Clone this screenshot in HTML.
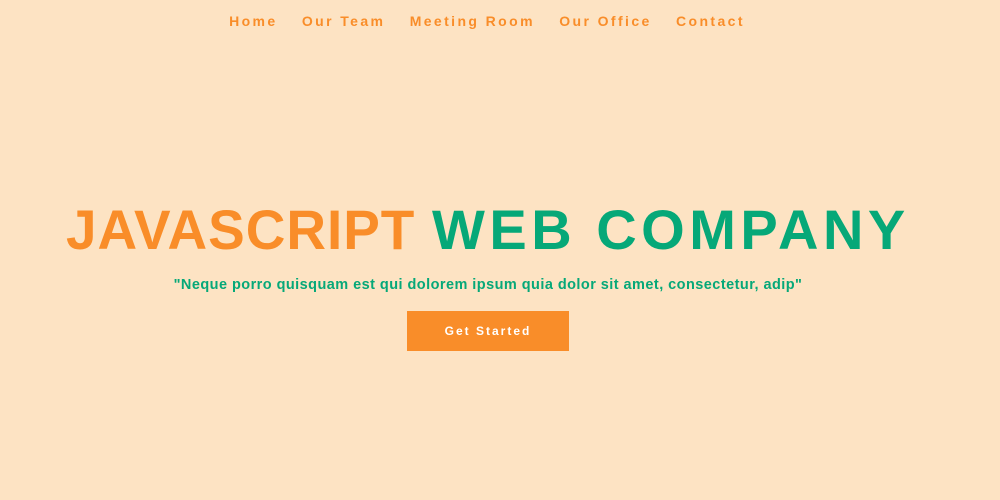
<!DOCTYPE html>
<html><head><style>
body{margin:0;width:1000px;height:500px;background:#fde3c3;font-family:"Liberation Sans",sans-serif;position:relative;overflow:hidden}
.nav{position:absolute;top:13px;left:-13px;width:1000px;text-align:center;font-size:14px;font-weight:bold;color:#f98d29;letter-spacing:2.4px;white-space:nowrap}
.nav span{margin:0 9px}
.h{position:absolute;top:195px;font-size:56px;font-weight:bold;white-space:nowrap;line-height:70px}
.js{left:66px;color:#f98d29;letter-spacing:1px;transform:scaleX(0.98);transform-origin:left}
.wc{left:432px;color:#06a878;letter-spacing:4.5px}
.sub{position:absolute;top:277px;left:-12px;width:1000px;text-align:center;font-size:14.5px;font-weight:bold;color:#06a878;white-space:nowrap;letter-spacing:0.45px}
.btn{position:absolute;left:407px;top:311px;width:162px;height:40px;background:#f98d29;color:#fff;font-size:12px;font-weight:bold;letter-spacing:2px;text-align:center;line-height:40px}
</style></head><body>
<div class="nav"><span>Home</span> <span>Our Team</span> <span>Meeting Room</span> <span>Our Office</span> <span>Contact</span></div>
<div class="h js">JAVASCRIPT</div>
<div class="h wc">WEB COMPANY</div>
<div class="sub">"Neque porro quisquam est qui dolorem ipsum quia dolor sit amet, consectetur, adip"</div>
<div class="btn">Get Started</div>
</body></html>
